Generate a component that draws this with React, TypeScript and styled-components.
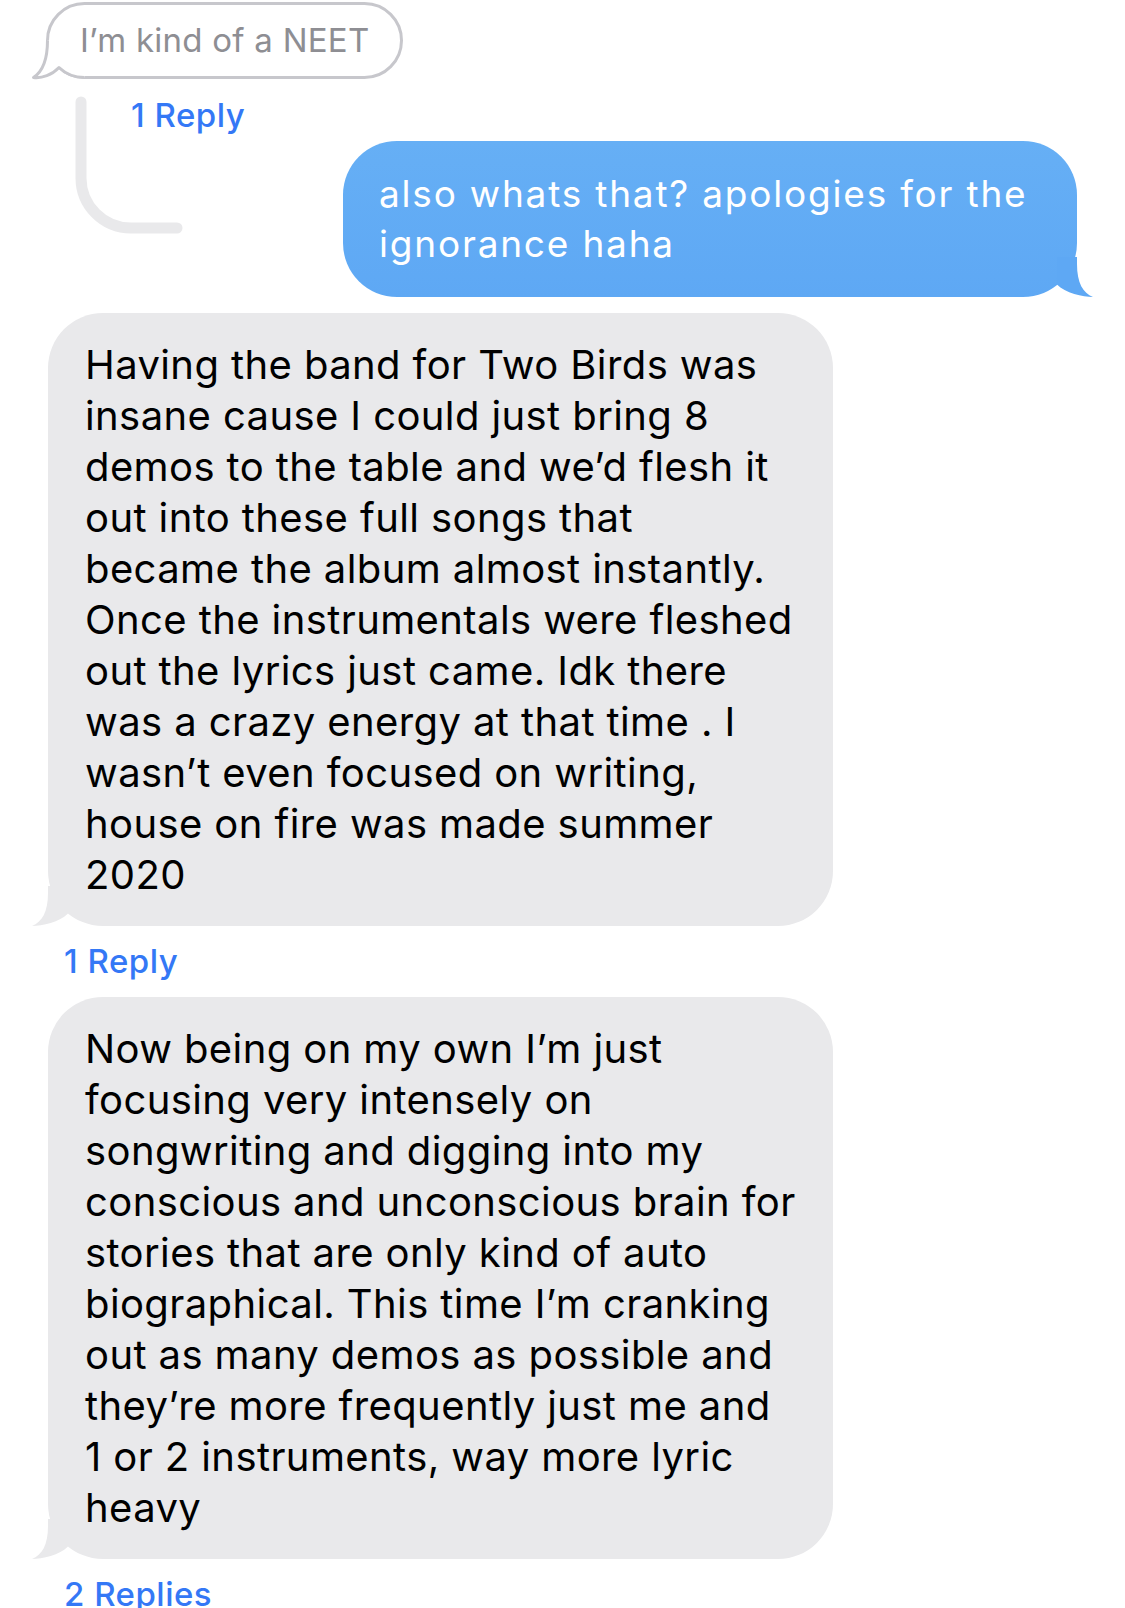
import React from 'react'
import styled, { createGlobalStyle } from 'styled-components'

const GlobalStyle = createGlobalStyle`
  html, body {
    margin: 0;
    padding: 0;
    background: #ffffff;
  }
  body {
    font-family: Inter, "Noto Sans", "Liberation Sans", sans-serif;
    -webkit-font-smoothing: antialiased;
  }
`

const Page = styled.div`
  width: 1125px;
  display: flex;
  flex-direction: column;
  align-items: flex-start;
  padding-top: 2px;
`

const OutlineBubble = styled.div`
  position: relative;
  box-sizing: border-box;
  height: 77px;
  margin-left: 46px;
  padding: 0 31px;
  border: 3px solid #c7c7cc;
  border-radius: 40px;
  color: #8e8e93;
  font-size: 33px;
  line-height: 71px;
  letter-spacing: 0.25px;
  white-space: nowrap;
`

const OutlineText = styled.span`
  position: relative;
  z-index: 1;
`

const OutlineTailSvg = styled.svg`
  position: absolute;
  left: -17px;
  bottom: -4px;
  overflow: visible;
`

const TailSvg = styled.svg<{ $side: 'left' | 'right' }>`
  position: absolute;
  bottom: 0;
  ${(p) => (p.$side === 'left' ? 'left: -16px;' : 'right: -16px; transform: scaleX(-1);')}
`

const Thread = styled.div`
  display: grid;
  grid-template-columns: 131px 1fr;
  grid-template-rows: auto auto;
  width: 100%;
`

const Connector = styled.svg`
  grid-column: 1 / 3;
  grid-row: 1 / 3;
  align-self: start;
  justify-self: start;
`

const ReplyLink = styled.div<{ $inThread?: boolean }>`
  font-size: 33px;
  font-weight: 500;
  line-height: 38px;
  letter-spacing: 0.5px;
  color: #3478f6;
  white-space: nowrap;
  ${(p) =>
    p.$inThread
      ? 'grid-column: 2; grid-row: 1; margin: 17px 0 7px 0;'
      : 'margin: 16px 0 17px 64px;'}
`

const SentBubble = styled.div`
  grid-column: 2;
  grid-row: 2;
  justify-self: end;
  position: relative;
  box-sizing: border-box;
  width: 734px;
  margin: 0 48px 16px 0;
  padding: 28px 30px 28px 36px;
  border-radius: 54px;
  background: linear-gradient(180deg, #66aff5 0%, #5ea8f4 100%);
  color: #ffffff;
  font-size: 37px;
  line-height: 50px;
  letter-spacing: 1.8px;
`

const ReceivedBubble = styled.div`
  position: relative;
  box-sizing: border-box;
  width: 785px;
  margin-left: 48px;
  padding: 26px 30px 26px 37px;
  border-radius: 55px;
  background: #e9e9eb;
  color: #000000;
  font-size: 40px;
  line-height: 51px;
  letter-spacing: 0.4px;
`

const Line = styled.span`
  display: block;
  white-space: nowrap;
`

const Tail = ({ side, color }: { side: 'left' | 'right'; color: string }) => (
  <TailSvg $side={side} width="40" height="40" viewBox="0 0 40 40">
    <path d="M16 0 L16 7 C16 26 10 36 0 40 C10 40 28 36 36 27.5 L36 0 Z" fill={color} />
  </TailSvg>
)

const OutlineTail = () => (
  <OutlineTailSvg width="70" height="52" viewBox="0 0 70 52">
    <path
      d="M15.5 12.5 C15.5 27 13 42 1.5 49.5 C10 50.5 20 47 27 39.5 A37 37 0 0 0 52.5 49.5 L52.5 12.5 Z"
      fill="#ffffff"
    />
    <path
      d="M15.5 12.5 C15.5 27 13 42 1.5 49.5 C10 50.5 20 47 27 39.5 A37 37 0 0 0 52.5 49.5"
      fill="none"
      stroke="#c7c7cc"
      strokeWidth="3"
      strokeLinejoin="round"
    />
  </OutlineTailSvg>
)

const firstMessage = [
  'Having the band for Two Birds was',
  'insane cause I could just bring 8',
  'demos to the table and we’d flesh it',
  'out into these full songs that',
  'became the album almost instantly.',
  'Once the instrumentals were fleshed',
  'out the lyrics just came. Idk there',
  'was a crazy energy at that time . I',
  'wasn’t even focused on writing,',
  'house on fire was made summer',
  '2020',
]

const secondMessage = [
  'Now being on my own I’m just',
  'focusing very intensely on',
  'songwriting and digging into my',
  'conscious and unconscious brain for',
  'stories that are only kind of auto',
  'biographical. This time I’m cranking',
  'out as many demos as possible and',
  'they’re more frequently just me and',
  '1 or 2 instruments, way more lyric',
  'heavy',
]

export default function App() {
  return (
    <Page>
      <GlobalStyle />
      <OutlineBubble>
        <OutlineText>I’m kind of a NEET</OutlineText>
        <OutlineTail />
      </OutlineBubble>

      <Thread>
        <Connector width="190" height="160" viewBox="0 0 190 160">
          <path
            d="M81 23 V99 A50 50 0 0 0 131 149 H177"
            fill="none"
            stroke="#e9e9eb"
            strokeWidth="11"
            strokeLinecap="round"
          />
        </Connector>
        <ReplyLink $inThread>1 Reply</ReplyLink>
        <SentBubble>
          <Line>also whats that? apologies for the</Line>
          <Line>ignorance haha</Line>
          <Tail side="right" color="#5ea8f4" />
        </SentBubble>
      </Thread>

      <ReceivedBubble>
        {firstMessage.map((l, i) => (
          <Line key={i}>{l}</Line>
        ))}
        <Tail side="left" color="#e9e9eb" />
      </ReceivedBubble>
      <ReplyLink>1 Reply</ReplyLink>

      <ReceivedBubble>
        {secondMessage.map((l, i) => (
          <Line key={i}>{l}</Line>
        ))}
        <Tail side="left" color="#e9e9eb" />
      </ReceivedBubble>
      <ReplyLink>2 Replies</ReplyLink>
    </Page>
  )
}
